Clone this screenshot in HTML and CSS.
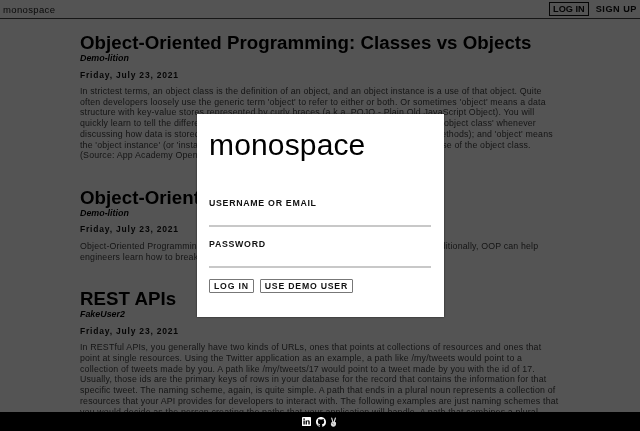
FILE: index.html
```html
<!DOCTYPE html>
<html lang="en">
<head>
<meta charset="utf-8">
<title>monospace</title>
<link rel="stylesheet" href="styles.css">
</head>
<body>
<div class="app">
  <header class="nav">
    <a class="brand">monospace</a>
    <div class="nav-actions">
      <a class="nav-btn nav-btn-boxed">LOG IN</a>
      <a class="nav-btn">SIGN UP</a>
    </div>
  </header>
  <main class="feed">
    <article class="post">
      <h1 class="post-title">Object-Oriented Programming: Classes vs Objects</h1>
      <div class="post-author">Demo-lition</div>
      <div class="post-date">Friday, July 23, 2021</div>
      <p class="post-body">In strictest terms, an object class is the definition of an object, and an object instance is a use of that object. Quite often developers loosely use the generic term 'object' to refer to either or both. Or sometimes 'object' means a data structure with key-value stores represented by curly braces (a.k.a. POJO - Plain Old JavaScript Object). You will quickly learn to tell the difference between these by the context alone: 'object' means the 'object class' whenever discussing how data is stored in the program and what it could do (its attributes and its methods); and 'object' means the 'object instance' (or 'instance') whenever discussing one particular and very specific use of the object class. (Source: App Academy Open)</p>
    </article>
    <article class="post">
      <h1 class="post-title">Object-Oriented Programming: Pillars</h1>
      <div class="post-author">Demo-lition</div>
      <div class="post-date">Friday, July 23, 2021</div>
      <p class="post-body">Object-Oriented Programming lets developers model code around things and reuse it. Additionally, OOP can help engineers learn how to break down large problems into small parts.</p>
    </article>
    <article class="post">
      <h1 class="post-title">REST APIs</h1>
      <div class="post-author">FakeUser2</div>
      <div class="post-date">Friday, July 23, 2021</div>
      <p class="post-body">In RESTful APIs, you generally have two kinds of URLs, ones that points at collections of resources and ones that point at single resources. Using the Twitter application as an example, a path like /my/tweets would point to a collection of tweets made by you. A path like /my/tweets/17 would point to a tweet made by you with the id of 17. Usually, those ids are the primary keys of rows in your database for the record that contains the information for that specific tweet. The naming scheme, again, is quite simple. A path that ends in a plural noun represents a collection of resources that your API provides for developers to interact with. The following examples are just naming schemes that you would decide as the person creating the paths that your application will handle. A path that combines a plural</p>
    </article>
  </main>
  <footer class="footer">
    <svg class="icon icon-linkedin" viewBox="0 0 16 16"><rect width="16" height="16" rx="1.5" fill="#fff"/><path fill="#000" d="M2.5 6h2.4v7.5H2.500zM3.700 2.400a1.400 1.400 0 1 1 0 2.800 1.400 1.400 0 0 1 0-2.800zM6.400 6h2.300v1.050C9.100 6.300 10 5.800 11.100 5.800c2.200 0 2.600 1.500 2.600 3.400v4.300h-2.400V9.700c0-.9 0-2-1.200-2s-1.350.95-1.350 1.950v3.850H6.400z"/></svg>
    <svg class="icon icon-github" viewBox="0 0 16 16"><path fill="#fff" d="M8 0C3.580 0 0 3.580 0 8c0 3.540 2.290 6.530 5.470 7.590.4.070.55-.17.55-.38 0-.19-.01-.82-.01-1.490-2.010.37-2.530-.49-2.690-.94-.09-.23-.48-.94-.82-1.130-.28-.15-.68-.52-.01-.53.63-.01 1.080.58 1.230.82.72 1.210 1.870.87 2.330.66.07-.52.28-.87.51-1.070-1.780-.2-3.640-.89-3.640-3.950 0-.87.31-1.590.82-2.150-.08-.2-.36-1.020.08-2.120 0 0 .67-.21 2.200.82.64-.18 1.320-.27 2-.27.68 0 1.360.09 2 .27 1.530-1.040 2.200-.82 2.200-.82.44 1.100.16 1.920.08 2.120.51.56.82 1.270.82 2.150 0 3.070-1.870 3.750-3.650 3.950.29.25.54.73.54 1.480 0 1.070-.01 1.930-.01 2.200 0 .21.15.46.55.38A8.013 8.013 0 0 0 16 8c0-4.420-3.580-8-8-8z"/></svg>
    <svg class="icon icon-angel" viewBox="0 0 12 16"><path fill="#ddd" d="M2.500 8.500C4.500 7.500 8 7.500 10 8.500c1 2.500.2 7.500-4 7.500-3.500 0-5-3-4.500-5.500z"/><path fill="none" stroke="#ddd" stroke-width="2" stroke-linecap="round" d="M4.700 7.500 3 1.200M7.300 7.500l2-6.300"/><path fill="none" stroke="#555" stroke-width="1" d="M2.800 10c1.700.2 3 .6 3.700 2.200"/></svg>
  </footer>
</div>
<div class="overlay">
  <form class="modal">
    <h2 class="modal-title">monospace</h2>
    <label class="field">
      <span class="field-label">USERNAME OR EMAIL</span>
      <input class="field-input" type="text">
    </label>
    <label class="field">
      <span class="field-label">PASSWORD</span>
      <input class="field-input" type="password">
    </label>
    <div class="modal-actions">
      <button class="modal-btn" type="button">LOG IN</button>
      <button class="modal-btn" type="button">USE DEMO USER</button>
    </div>
  </form>
</div>
</body>
</html>
```
FILE: styles.css
```css
* { box-sizing: border-box; }
html, body { height: 100%; }
body {
  margin: 0;
  overflow: hidden;
  background: #fff;
  color: #222;
  font-family: "Liberation Sans", Arial, sans-serif;
  filter: blur(0.4px);
}
.app {
  display: flex;
  flex-direction: column;
  height: 100vh;
}
.nav {
  flex: none;
  height: 19px;
  display: flex;
  justify-content: space-between;
  align-items: center;
  padding: 0 0 0 3px;
  border-bottom: 1px solid #444;
}
.brand {
  font-size: 9.5px;
  letter-spacing: 0.35px;
  color: #222;
}
.nav-actions {
  display: flex;
  align-items: center;
  gap: 4px;
}
.nav-btn {
  font-size: 9.2px;
  font-weight: 700;
  letter-spacing: 0.5px;
  padding: 1px 2px;
  border: 1px solid transparent;
  color: #111;
}
.nav-btn-boxed {
  padding: 1px 3px;
  border-color: #111;
  letter-spacing: 0;
}
.feed {
  flex: 1;
  min-height: 0;
  overflow: hidden;
  padding: 13px 80px 0;
}
.post { margin-bottom: 26px; }
.post-title {
  margin: 0;
  font-size: 18.7px;
  line-height: 21px;
  font-weight: 700;
  letter-spacing: 0.04px;
  color: #000;
  white-space: nowrap;
}
.post-author {
  font-size: 8.9px;
  line-height: 11px;
  font-weight: 700;
  font-style: italic;
  color: #000;
}
.post-date {
  margin-top: 5.5px;
  font-size: 8.5px;
  line-height: 11px;
  font-weight: 700;
  letter-spacing: 0.8px;
  color: #111;
}
.post-body {
  margin: 5.5px 0 0;
  font-size: 8.8px;
  line-height: 10.7px;
  letter-spacing: 0.17px;
  color: #444;
}
.footer {
  position: relative;
  z-index: 2;
  flex: none;
  height: 19px;
  padding-right: 1px;
  background: #000;
  display: flex;
  justify-content: center;
  align-items: center;
  gap: 4.5px;
}
.icon { display: block; }
.icon-linkedin { width: 9px; height: 9px; }
.icon-github { width: 10px; height: 10px; }
.icon-angel { width: 7px; height: 10px; }
.overlay {
  position: fixed;
  inset: 0;
  z-index: 1;
  background: rgba(0, 0, 0, 0.67);
  display: flex;
  justify-content: center;
  align-items: center;
}
.modal {
  width: 247px;
  height: 203px;
  background: #fff;
  padding: 13px 13px 0 12.5px;
  box-shadow: 0 0 2px rgba(0, 0, 0, 0.6);
}
.modal-title {
  margin: 0 0 35px;
  font-size: 30px;
  line-height: 36px;
  font-weight: 400;
  letter-spacing: 0.15px;
  color: #000;
}
.field {
  display: block;
  margin-bottom: 11.5px;
}
.field-label {
  display: block;
  font-size: 8.8px;
  line-height: 11px;
  font-weight: 700;
  letter-spacing: 0.7px;
  color: #111;
}
.field-input {
  display: block;
  width: 100%;
  height: 18px;
  padding: 0;
  border: 0;
  border-bottom: 2px solid #c8c8c8;
  background: transparent;
  outline: none;
}
.modal-actions {
  display: flex;
  gap: 6px;
}
.modal-btn {
  height: 14px;
  padding: 0 4px;
  border: 1px solid #777;
  border-radius: 1px;
  background: #fff;
  color: #111;
  font-family: inherit;
  font-size: 8.7px;
  font-weight: 700;
  letter-spacing: 0.8px;
  line-height: 1;
}
```
